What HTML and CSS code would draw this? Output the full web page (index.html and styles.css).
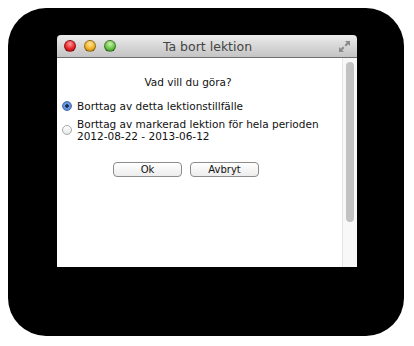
FILE: index.html
```html
<!doctype html>
<html lang="sv">
<head>
    <meta charset="UTF-8">
    <title>Ta bort lektion</title>
    <link rel="stylesheet" href="styles.css">
</head>
<body>
<div class="backdrop">
    <div class="window">
        <div class="titlebar">
            <div class="lights">
                <span class="light red"></span>
                <span class="light yellow"></span>
                <span class="light green"></span>
            </div>
            <div class="title">Ta bort lektion</div>
            <div class="corner">
                <svg class="resize" width="13" height="13" viewBox="0 0 13 13">
                    <path d="M7 1h5v5l-1.8-1.8-2.2 2.2-1.4-1.4 2.2-2.2z" fill="#8a8a8a"/>
                    <path d="M6 12H1V7l1.8 1.8 2.2-2.2 1.4 1.4-2.2 2.2z" fill="#8a8a8a"/>
                </svg>
            </div>
        </div>
        <div class="body">
            <div class="main">
                <p class="question">Vad vill du göra?</p>
                <label class="option">
                    <span class="radio checked"></span>
                    <span>Borttag av detta lektionstillfälle</span>
                </label>
                <label class="option">
                    <span class="radio"></span>
                    <span>Borttag av markerad lektion för hela perioden<br>2012-08-22 - 2013-06-12</span>
                </label>
                <div class="buttons">
                    <button class="btn">Ok</button>
                    <button class="btn">Avbryt</button>
                </div>
            </div>
            <div class="scrollbar">
                <div class="thumb"></div>
            </div>
        </div>
    </div>
</div>
</body>
</html>
```

FILE: styles.css
```css
body{
    margin:0;
    background-color:#fff;
    font-family:"DejaVu Sans", Verdana, sans-serif;
}

.backdrop{
    margin:8px;
    width:396px;
    height:328px;
    box-sizing:border-box;
    padding:27px 0 0 49px;
    background-color:#000;
    border-radius:38px;
}

.window{
    width:300px;
    height:232px;
    display:flex;
    flex-direction:column;
    border-radius:4px 4px 0 0;
    overflow:hidden;
}

.titlebar{
    height:22px;
    display:flex;
    align-items:center;
    padding:0 6px 0 7px;
    background:linear-gradient(#ececec, #d3d3d3 60%, #c4c4c4);
    border-bottom:1px solid #6e6e6e;
    flex-shrink:0;
}
.lights{
    display:flex;
    gap:8px;
    width:60px;
}
.light{
    width:12px;
    height:12px;
    border-radius:50%;
    box-sizing:border-box;
    border:1px solid rgba(0,0,0,.35);
}
.light.red{
    background:radial-gradient(circle at 50% 30%, #ff9a9a, #e8262a 55%, #a8090e);
}
.light.yellow{
    background:radial-gradient(circle at 50% 30%, #ffe79a, #f2b32a 55%, #b07408);
}
.light.green{
    background:radial-gradient(circle at 50% 30%, #c8f5a8, #6cc24a 55%, #2e8a1a);
}
.title{
    flex:1;
    text-align:center;
    font-size:12.5px;
    color:#444;
}
.corner{
    width:60px;
    display:flex;
    justify-content:flex-end;
}

.body{
    flex:1;
    display:flex;
    background-color:#fff;
}
.main{
    flex:1;
    padding:17px 0 0 5px;
    font-size:10.5px;
    color:#111;
}
.question{
    margin:0 0 11px;
    padding-right:28px;
    text-align:center;
    line-height:14px;
}
.option{
    display:flex;
    align-items:center;
    gap:5px;
    line-height:12px;
    margin-bottom:6px;
}
.radio{
    width:10px;
    height:10px;
    box-sizing:border-box;
    border-radius:50%;
    border:1px solid #a9a9a9;
    background:linear-gradient(#fff, #e6e6e6);
    flex-shrink:0;
}
.radio.checked{
    border-color:#4a6fae;
    background:radial-gradient(circle, #1a2a4a 0 1.5px, #6f9ee6 2px, #3d74cc);
}

.buttons{
    display:flex;
    gap:8px;
    margin:20px 0 0 51px;
}
.btn{
    width:69px;
    height:15px;
    padding:0;
    font-family:"DejaVu Sans", sans-serif;
    font-size:10px;
    color:#111;
    border:1px solid #8c8c8c;
    border-radius:4px;
    background:linear-gradient(#fff, #ececec);
}

.scrollbar{
    width:15px;
    box-sizing:border-box;
    border-left:1px solid #e6e6e6;
    background-color:#f8f8f8;
    padding:4px 0 0 3px;
}
.thumb{
    width:8px;
    height:160px;
    border-radius:4px;
    background-color:#c2c2c2;
}
```
